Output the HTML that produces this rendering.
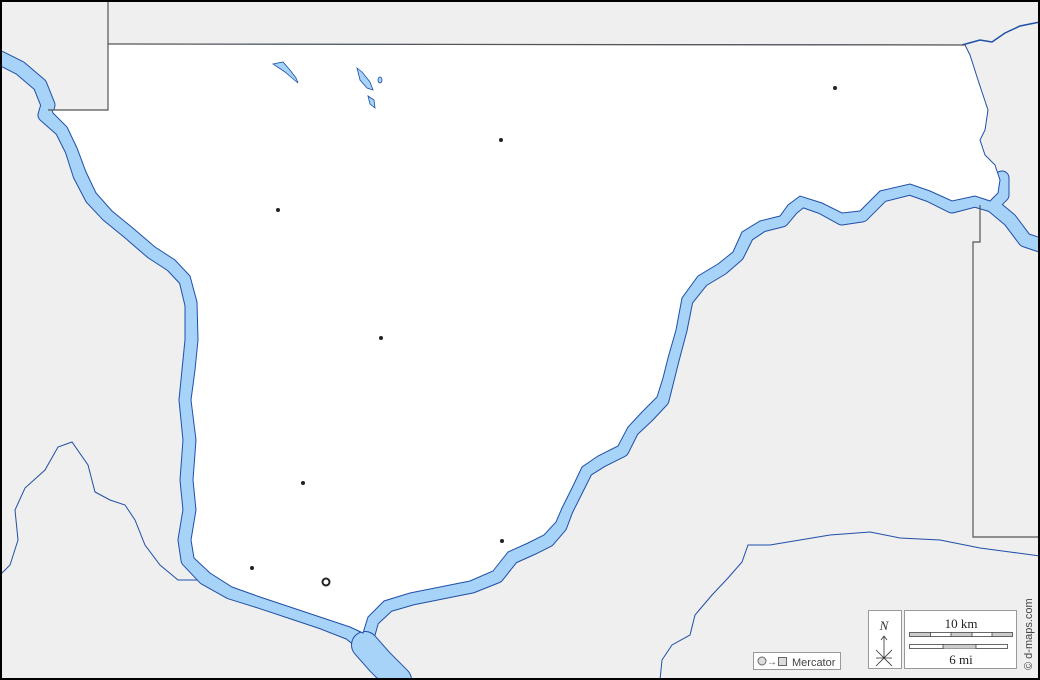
<!DOCTYPE html><html><head><style>html,body{margin:0;padding:0;background:#efefef}svg{display:block}</style></head><body>
<svg width="1040" height="680" viewBox="0 0 1040 680" xmlns="http://www.w3.org/2000/svg">
<rect width="1040" height="680" fill="#efefef"/>
<g fill="none" stroke="#1f4fa8" stroke-width="1">
<path d="M0,575 L10,565 L18,540 L15,510 L25,488 L45,470 L58,447 L72,442 L88,465 L95,492 L110,500 L125,505 L135,520 L145,545 L160,565 L178,580 L205,580"/>
<path d="M660,680 L662,660 L672,645 L690,635 L695,615 L712,595 L728,578 L742,562 L748,545 L770,545 L800,540 L830,535 L870,532 L900,538 L940,540 L980,548 L1010,552 L1040,556"/>
<path d="M962,45 L980,40 L992,42 L1005,33 L1020,26 L1040,22" stroke-width="1.5"/>
</g>
<g stroke-linejoin="round" stroke-linecap="round" fill="none">
<path id="r" d="M0,58 L20,68 L40,85 L48,105 L45,115 L62,130 L72,150 L80,175 L92,198 L108,215 L130,233 L152,252 L172,265 L186,280 L192,305 L192,340 L189,370 L186,400 L190,440 L187,480 L190,510 L185,540 L188,560 L205,578 L230,592 L262,602 L292,612 L322,622 L350,633 L365,645 M365,645 L372,620 L388,605 L412,598 L442,592 L472,586 L497,576 L512,557 L532,548 L548,540 L560,526 L566,510 L576,490 L586,470 L602,460 L622,450 L632,430 L648,415 L662,400 L667,380 L672,360 L680,330 L686,300 L702,280 L722,268 L737,255 L747,235 L762,225 L782,220 L792,208 L802,200 L822,207 L842,218 L862,215 L882,195 L910,188 L930,195 L952,206 L975,200 L992,205 L1002,195 L1002,178 M992,205 L1010,220 L1025,240 L1040,245"/>
<use href="#r" stroke="#1f4fa8" stroke-width="15"/>
<use href="#r" stroke="#a6d3f7" stroke-width="13"/>
<path d="M365,645 L380,662 L398,680" stroke="#1f4fa8" stroke-width="28"/>
<path d="M365,645 L380,662 L398,680" stroke="#a6d3f7" stroke-width="26"/>
</g>
<path fill="#fff" stroke="#1f4fa8" stroke-width="1" d="M108,44 L965,45 L970,55 L978,80 L988,110 L985,130 L980,140 L985,155 L995,165 L1000,180 L998,193 L990,201 L975,196 L952,201 L930,191 L910,184 L880,191 L860,211 L842,213 L822,203 L800,196 L788,205 L780,216 L760,221 L742,232 L733,252 L718,264 L698,276 L682,298 L676,330 L668,358 L663,378 L657,397 L643,411 L628,427 L618,446 L598,456 L582,467 L572,488 L562,508 L556,522 L544,535 L528,543 L508,552 L493,571 L470,581 L440,587 L410,593 L384,601 L368,617 L363,633 L350,627 L320,617 L290,607 L260,597 L232,587 L210,573 L194,558 L191,540 L196,510 L193,480 L196,440 L191,400 L195,370 L198,340 L197,302 L190,276 L175,260 L155,247 L134,229 L112,211 L96,193 L86,172 L77,148 L67,127 L53,113 L52,110 L108,110 Z"/>
<g fill="none" stroke="#555" stroke-width="1.2">
<path d="M108,0 L108,110 L48,110"/>
<path d="M108,44 L965,45"/>
<path d="M980,205 L980,242 L973,242 L973,537 L1040,537"/>
</g>
<g fill="#a6d3f7" stroke="#1f4fa8" stroke-width="0.8">
<path d="M273,64 L283,62 L290,70 L296,78 L298,83 L292,78 L285,72 Z"/>
<path d="M357,68 L362,72 L370,82 L373,90 L367,88 L360,80 Z"/>
<path d="M368,96 L374,100 L375,108 L370,104 Z"/>
<ellipse cx="380" cy="80" rx="2" ry="3"/>
</g>
<g fill="#222">
<circle cx="835" cy="88" r="2"/><circle cx="501" cy="140" r="2"/><circle cx="278" cy="210" r="2"/><circle cx="381" cy="338" r="2"/><circle cx="303" cy="483" r="2"/><circle cx="502" cy="541" r="2"/><circle cx="252" cy="568" r="2"/>
</g>
<circle cx="326" cy="582" r="3.5" fill="#fff" stroke="#222" stroke-width="2"/>
<rect x="1" y="1" width="1038" height="678" fill="none" stroke="#000" stroke-width="2"/>
<g font-family="Liberation Sans, sans-serif">
<rect x="753.5" y="652.5" width="87" height="17" fill="#fff" stroke="#999"/>
<circle cx="762" cy="661" r="4" fill="#ddd" stroke="#666"/>
<text x="767" y="665" font-size="10" fill="#555">→</text>
<rect x="778.5" y="657.5" width="8" height="8" fill="#ddd" stroke="#666"/>
<text x="792" y="666" font-size="11" fill="#444">Mercator</text>
<rect x="868.5" y="610.5" width="33" height="58" fill="#fff" stroke="#999"/>
<text x="884" y="630" font-size="13" font-family="Liberation Serif, serif" font-style="italic" text-anchor="middle" fill="#333">N</text>
<path d="M884,658 L884,637 M881,640 L884,636 L887,640 M876,650 L892,666 M892,650 L876,666 M876,658 L892,658" stroke="#333" stroke-width="0.8" fill="none"/>
<rect x="904.5" y="610.5" width="112" height="58" fill="#fff" stroke="#999"/>
<text x="961" y="628" font-size="13" font-family="Liberation Serif, serif" text-anchor="middle" fill="#222">10 km</text>
<text x="961" y="664" font-size="13" font-family="Liberation Serif, serif" text-anchor="middle" fill="#222">6 mi</text>
<rect x="909.5" y="632.5" width="21" height="4" fill="#ccc"/><rect x="951" y="632.5" width="21" height="4" fill="#ccc"/><rect x="992" y="632.5" width="21" height="4" fill="#ccc"/>
<rect x="909.5" y="632.5" width="103" height="4" fill="none" stroke="#444" stroke-width="0.8"/>
<path d="M930.5,632 V637 M951,632 V637 M972,632 V637 M992,632 V637" stroke="#444" stroke-width="0.8"/>
<rect x="909.5" y="644.5" width="98" height="4" fill="#fff" stroke="#444" stroke-width="0.8"/>
<rect x="943" y="645" width="33" height="3.5" fill="#ccc"/>
<path d="M943,644 V649 M976,644 V649" stroke="#444" stroke-width="0.8"/>
<text transform="translate(1032,670) rotate(-90)" font-size="11" fill="#444">© d-maps.com</text>
</g>
</svg>
</body></html>
